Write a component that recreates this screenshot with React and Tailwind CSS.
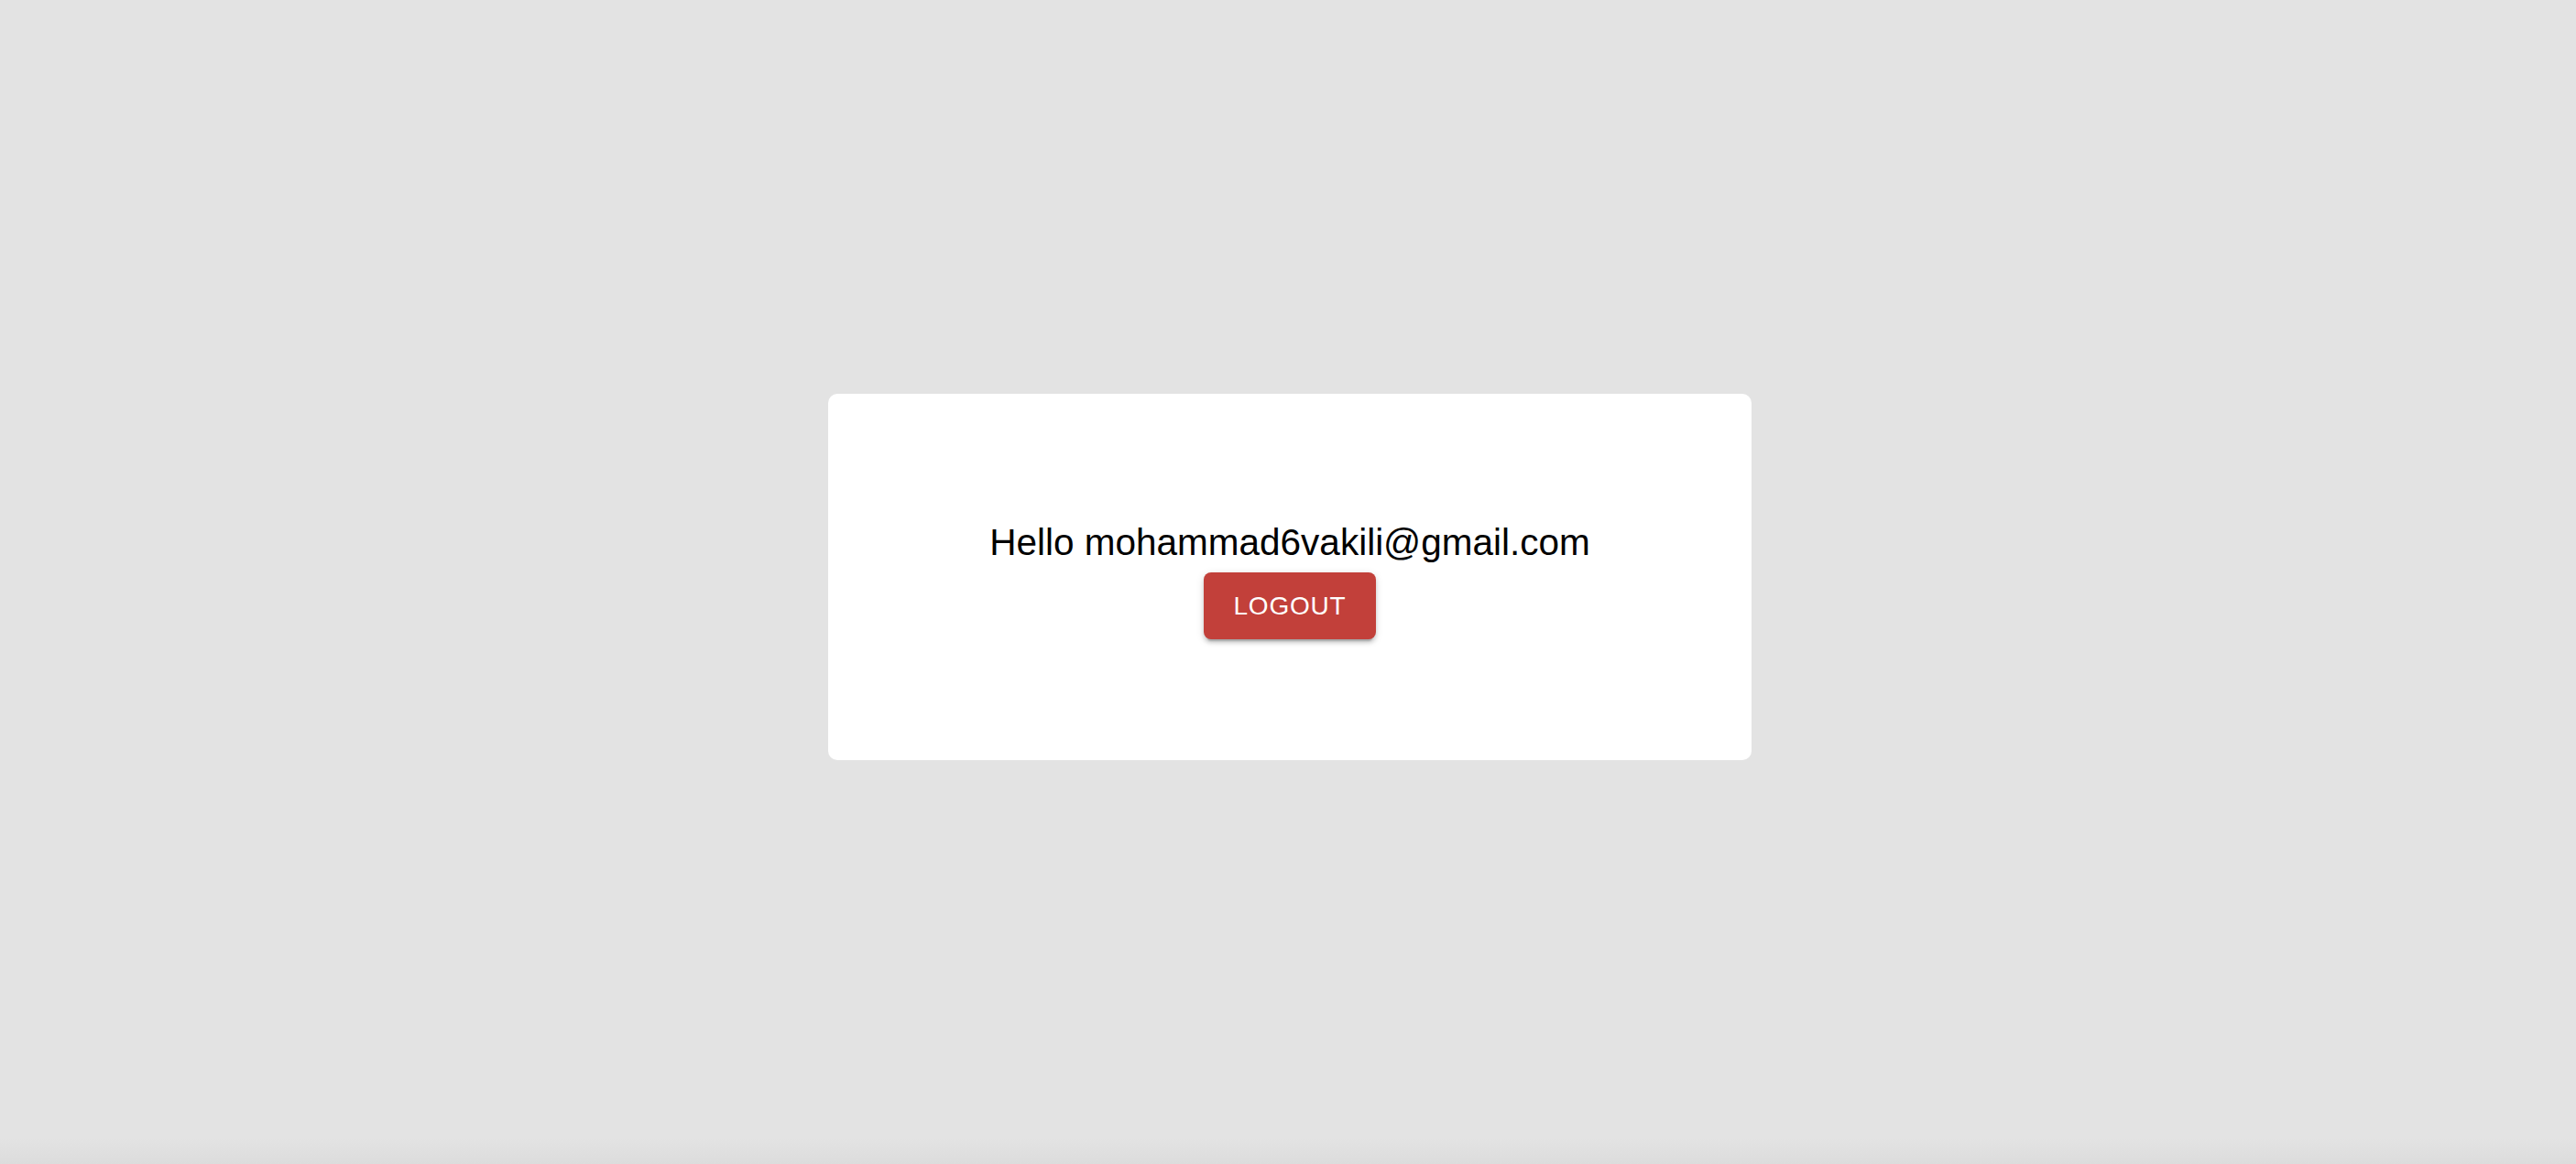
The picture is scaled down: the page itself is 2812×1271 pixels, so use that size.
import React from 'react';

const Dashboard = ({ email }) => {
    return (
        <div className="w-full h-[1271px] bg-[#e3e3e3] flex flex-col font-['Liberation_Sans',Arial,sans-serif]">
            <div className="flex-1 flex justify-center pt-[430px] pl-[4px]">
                <div className="w-[1008px] h-[400px] bg-white rounded-[10px] flex flex-col items-center justify-center">
                    <p className="text-[40.5px] leading-[60px] text-black">Hello {email}</p>
                    <button
                        type="button"
                        className="mt-[3px] h-[73px] px-[32px] rounded-[8px] bg-[#c2403a] text-white text-[28px] tracking-[0.8px] uppercase shadow-[0_6px_2px_-4px_rgba(0,0,0,0.2),0_4px_4px_0_rgba(0,0,0,0.14),0_2px_10px_0_rgba(0,0,0,0.12)]"
                    >
                        Logout
                    </button>
                </div>
            </div>
            <div className="h-[28px] bg-gradient-to-b from-[#e3e3e3] to-[#dcdcdc]" />
        </div>
    );
};

const App = () => <Dashboard email="mohammad6vakili@gmail.com" />;

export default App;
